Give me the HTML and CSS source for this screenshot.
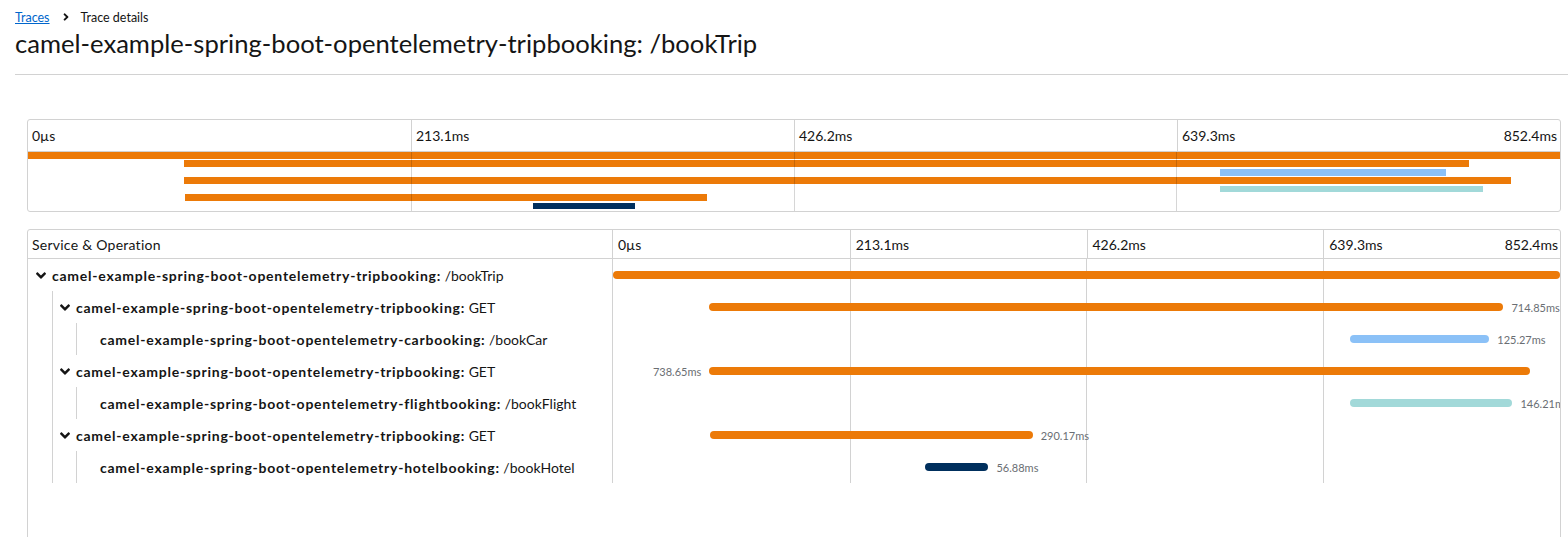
FILE: index.html
```html
<!DOCTYPE html>
<html lang="en">
<head>
<meta charset="utf-8">
<title>Trace details</title>
<link rel="stylesheet" href="styles.css">
</head>
<body>
<header class="page-header">
  <nav class="breadcrumb">
    <a class="crumb-link" href="#">Traces</a>
    <svg class="crumb-sep" viewBox="0 0 256 512" aria-hidden="true"><path d="M224.3 273l-136 136c-9.4 9.4-24.6 9.4-33.9 0l-22.6-22.6c-9.4-9.4-9.4-24.6 0-33.9l96.4-96.4-96.4-96.4c-9.4-9.4-9.4-24.6 0-33.9L54.3 103c9.4-9.4 24.6-9.4 33.9 0l136 136c9.5 9.4 9.5 24.6.1 34z"/></svg>
    <span class="crumb-current">Trace details</span>
  </nav>
  <h1 class="title">camel-example-spring-boot-opentelemetry-tripbooking: /bookTrip</h1>
</header>

<main class="content">
  <section class="minimap">
    <div class="mm-ticks">
      <div class="mm-tick">0µs</div>
      <div class="mm-tick">213.1ms</div>
      <div class="mm-tick">426.2ms</div>
      <div class="mm-tick mm-tick-last"><span>639.3ms</span><span>852.4ms</span></div>
    </div>
    <div class="mm-bars">
      <div class="mm-row"><div class="mm-bar c-orange" style="margin-left:0%;width:100%"></div></div>
      <div class="mm-row"><div class="mm-bar c-orange" style="margin-left:10.17%;width:83.86%"></div></div>
      <div class="mm-row"><div class="mm-bar c-blue" style="margin-left:77.83%;width:14.70%"></div></div>
      <div class="mm-row"><div class="mm-bar c-orange" style="margin-left:10.17%;width:86.66%"></div></div>
      <div class="mm-row"><div class="mm-bar c-teal" style="margin-left:77.83%;width:17.15%"></div></div>
      <div class="mm-row"><div class="mm-bar c-orange" style="margin-left:10.28%;width:34.04%"></div></div>
      <div class="mm-row"><div class="mm-bar c-navy" style="margin-left:32.98%;width:6.67%"></div></div>
    </div>
  </section>

  <section class="trace-table">
    <div class="tt-header">
      <div class="tt-name-head">Service &amp; Operation</div>
      <div class="tt-ticks">
        <div class="tt-tick">0µs</div>
        <div class="tt-tick">213.1ms</div>
        <div class="tt-tick">426.2ms</div>
        <div class="tt-tick tt-tick-last"><span>639.3ms</span><span>852.4ms</span></div>
      </div>
    </div>

    <div class="tt-row">
      <div class="tt-name">
        <span class="toggle"><svg class="chev" viewBox="0 0 320 512" aria-hidden="true"><path d="M143 352.3L7 216.3c-9.4-9.4-9.4-24.6 0-33.9l22.6-22.6c9.4-9.4 24.6-9.4 33.9 0l96.4 96.4 96.4-96.4c9.4-9.4 24.6-9.4 33.9 0l22.6 22.6c9.4 9.4 9.4 24.6 0 33.9l-136 136c-9.2 9.4-24.4 9.4-33.8 0z"/></svg></span>
        <span class="label"><b class="svc">camel-example-spring-boot-opentelemetry-tripbooking:</b>&nbsp;<span class="op">/bookTrip</span></span>
      </div>
      <div class="tt-timeline">
        <div class="tt-offset" style="width:0%"></div>
        <div class="tt-bar c-orange" style="width:100%"></div>
      </div>
    </div>

    <div class="tt-row">
      <div class="tt-name">
        <span class="guide"></span>
        <span class="toggle"><svg class="chev" viewBox="0 0 320 512" aria-hidden="true"><path d="M143 352.3L7 216.3c-9.4-9.4-9.4-24.6 0-33.9l22.6-22.6c9.4-9.4 24.6-9.4 33.9 0l96.4 96.4 96.4-96.4c9.4-9.4 24.6-9.4 33.9 0l22.6 22.6c9.4 9.4 9.4 24.6 0 33.9l-136 136c-9.2 9.4-24.4 9.4-33.8 0z"/></svg></span>
        <span class="label"><b class="svc">camel-example-spring-boot-opentelemetry-tripbooking:</b>&nbsp;<span class="op">GET</span></span>
      </div>
      <div class="tt-timeline">
        <div class="tt-offset" style="width:10.17%"></div>
        <div class="tt-bar c-orange" style="width:83.86%"></div>
        <span class="tt-dur">714.85ms</span>
      </div>
    </div>

    <div class="tt-row">
      <div class="tt-name">
        <span class="guide"></span>
        <span class="guide"></span>
        <span class="toggle"></span>
        <span class="label"><b class="svc">camel-example-spring-boot-opentelemetry-carbooking:</b>&nbsp;<span class="op">/bookCar</span></span>
      </div>
      <div class="tt-timeline">
        <div class="tt-offset" style="width:77.83%"></div>
        <div class="tt-bar c-blue" style="width:14.70%"></div>
        <span class="tt-dur">125.27ms</span>
      </div>
    </div>

    <div class="tt-row">
      <div class="tt-name">
        <span class="guide"></span>
        <span class="toggle"><svg class="chev" viewBox="0 0 320 512" aria-hidden="true"><path d="M143 352.3L7 216.3c-9.4-9.4-9.4-24.6 0-33.9l22.6-22.6c9.4-9.4 24.6-9.4 33.9 0l96.4 96.4 96.4-96.4c9.4-9.4 24.6-9.4 33.9 0l22.6 22.6c9.4 9.4 9.4 24.6 0 33.9l-136 136c-9.2 9.4-24.4 9.4-33.8 0z"/></svg></span>
        <span class="label"><b class="svc">camel-example-spring-boot-opentelemetry-tripbooking:</b>&nbsp;<span class="op">GET</span></span>
      </div>
      <div class="tt-timeline">
        <div class="tt-offset" style="width:10.17%"><span class="tt-dur tt-dur-left">738.65ms</span></div>
        <div class="tt-bar c-orange" style="width:86.66%"></div>
      </div>
    </div>

    <div class="tt-row">
      <div class="tt-name">
        <span class="guide"></span>
        <span class="guide"></span>
        <span class="toggle"></span>
        <span class="label"><b class="svc">camel-example-spring-boot-opentelemetry-flightbooking:</b>&nbsp;<span class="op">/bookFlight</span></span>
      </div>
      <div class="tt-timeline">
        <div class="tt-offset" style="width:77.83%"></div>
        <div class="tt-bar c-teal" style="width:17.15%"></div>
        <span class="tt-dur">146.21ms</span>
      </div>
    </div>

    <div class="tt-row">
      <div class="tt-name">
        <span class="guide"></span>
        <span class="toggle"><svg class="chev" viewBox="0 0 320 512" aria-hidden="true"><path d="M143 352.3L7 216.3c-9.4-9.4-9.4-24.6 0-33.9l22.6-22.6c9.4-9.4 24.6-9.4 33.9 0l96.4 96.4 96.4-96.4c9.4-9.4 24.6-9.4 33.9 0l22.6 22.6c9.4 9.4 9.4 24.6 0 33.9l-136 136c-9.2 9.4-24.4 9.4-33.8 0z"/></svg></span>
        <span class="label"><b class="svc">camel-example-spring-boot-opentelemetry-tripbooking:</b>&nbsp;<span class="op">GET</span></span>
      </div>
      <div class="tt-timeline">
        <div class="tt-offset" style="width:10.28%"></div>
        <div class="tt-bar c-orange" style="width:34.04%"></div>
        <span class="tt-dur">290.17ms</span>
      </div>
    </div>

    <div class="tt-row">
      <div class="tt-name">
        <span class="guide"></span>
        <span class="guide"></span>
        <span class="toggle"></span>
        <span class="label"><b class="svc">camel-example-spring-boot-opentelemetry-hotelbooking:</b>&nbsp;<span class="op">/bookHotel</span></span>
      </div>
      <div class="tt-timeline">
        <div class="tt-offset" style="width:32.98%"></div>
        <div class="tt-bar c-navy" style="width:6.67%"></div>
        <span class="tt-dur">56.88ms</span>
      </div>
    </div>
  </section>
</main>
</body>
</html>
```

FILE: styles.css
```css
* { box-sizing: border-box; }

body {
  margin: 0;
  font-family: Lato, "Noto Sans", sans-serif;
  color: #151515;
  background: #fff;
}

/* ---------- page header ---------- */
.page-header {
  margin-left: 15px;
  padding-top: 8px;
  padding-bottom: 16px;
  border-bottom: 1px solid #d2d2d2;
}

.breadcrumb {
  display: flex;
  align-items: center;
  height: 18px;
  font-size: 12.5px;
}

.crumb-link {
  color: #0066cc;
  text-decoration: underline;
}

.crumb-sep {
  width: 6px;
  height: 12px;
  margin: 0 12px 0 13px;
  fill: #151515;
}

.crumb-current { color: #151515; }

.title {
  margin: 2px 0 0;
  font-size: 25.6px;
  font-weight: 400;
  line-height: 30px;
}

/* ---------- content ---------- */
.content {
  margin: 44px 7px 0 27px;
}

/* ---------- minimap ---------- */
.minimap {
  border: 1px solid #d2d2d2;
  border-radius: 3px;
}

.mm-ticks {
  display: grid;
  grid-template-columns: repeat(4, 1fr);
  height: 32px;
  border-bottom: 1px solid #d2d2d2;
}

.mm-tick {
  display: flex;
  align-items: center;
  padding: 0 3px 0 4px;
  font-size: 14px;
}

.mm-tick + .mm-tick { border-left: 1px solid #d2d2d2; }

.mm-tick-last { justify-content: space-between; }

.mm-bars {
  position: relative;
  display: flex;
  flex-direction: column;
  height: 59px;
}

.mm-bars::after {
  content: "";
  position: absolute;
  inset: 0;
  pointer-events: none;
  background:
    linear-gradient(rgba(0,0,0,0.16), rgba(0,0,0,0.16)) 25% 0 / 1px 100% no-repeat,
    linear-gradient(rgba(0,0,0,0.16), rgba(0,0,0,0.16)) 50% 0 / 1px 100% no-repeat,
    linear-gradient(rgba(0,0,0,0.16), rgba(0,0,0,0.16)) 75% 0 / 1px 100% no-repeat;
}

.mm-row {
  height: 8.43px;
  flex: none;
}

.mm-bar { height: 6.7px; }

/* ---------- colours ---------- */
.c-orange { background: #ec7a08; }
.c-blue   { background: #8bc1f7; }
.c-teal   { background: #a2d9d9; }
.c-navy   { background: #002f5d; }

/* ---------- trace table ---------- */
.trace-table {
  margin-top: 17px;
  border: 1px solid #d2d2d2;
  border-radius: 3px 3px 0 0;
  min-height: 360px;
}

.tt-header {
  display: flex;
  height: 29px;
  border-bottom: 1px solid #d2d2d2;
  font-size: 14px;
}

.tt-name-head {
  width: 585px;
  flex: none;
  display: flex;
  align-items: center;
  padding-left: 4px;
  border-right: 1px solid #d2d2d2;
  letter-spacing: 0.25px;
}

.tt-ticks {
  flex: 1;
  display: grid;
  grid-template-columns: repeat(4, 1fr);
}

.tt-tick {
  display: flex;
  align-items: center;
  padding: 0 2px 0 5px;
}

.tt-tick + .tt-tick { border-left: 1px solid #d2d2d2; }

.tt-tick-last { justify-content: space-between; }

.tt-row {
  display: flex;
  height: 32px;
}

.tt-name {
  width: 585px;
  flex: none;
  display: flex;
  align-items: stretch;
  border-right: 1px solid #d2d2d2;
  font-size: 14px;
  white-space: nowrap;
  overflow: hidden;
}

.guide {
  width: 24px;
  flex: none;
  box-shadow: 1px 0 0 #d2d2d2;
}

.toggle {
  width: 24px;
  flex: none;
  display: flex;
  align-items: center;
  justify-content: center;
  padding-left: 1px;
}

.chev {
  width: 10px;
  height: 17px;
  fill: #151515;
}

.label {
  display: flex;
  align-items: center;
}

.svc {
  font-weight: 700;
  letter-spacing: 0.75px;
}

.tt-timeline {
  flex: 1;
  display: flex;
  align-items: center;
  overflow: hidden;
  background:
    linear-gradient(#d2d2d2, #d2d2d2) 25% 0 / 1px 100% no-repeat,
    linear-gradient(#d2d2d2, #d2d2d2) 50% 0 / 1px 100% no-repeat,
    linear-gradient(#d2d2d2, #d2d2d2) 75% 0 / 1px 100% no-repeat;
}

.tt-offset {
  flex: none;
  display: flex;
  justify-content: flex-end;
}

.tt-bar {
  flex: none;
  height: 8px;
  border-radius: 4px;
}

.tt-dur {
  flex: none;
  margin-left: 8px;
  font-size: 11px;
  color: #6a6e73;
  white-space: nowrap;
}

.tt-dur-left {
  margin-left: 0;
  margin-right: 8px;
}
```
